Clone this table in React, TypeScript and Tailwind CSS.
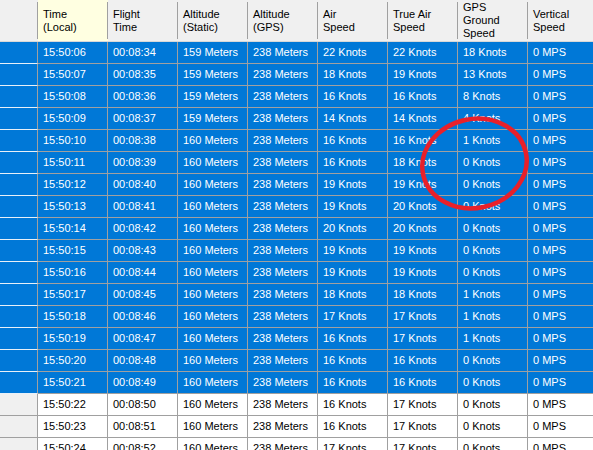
const COLUMNS = [
  ["Time", "(Local)"],
  ["Flight", "Time"],
  ["Altitude", "(Static)"],
  ["Altitude", "(GPS)"],
  ["Air", "Speed"],
  ["True Air", "Speed"],
  ["GPS", "Ground", "Speed"],
  ["Vertical", "Speed"],
];

// sec, flight sec, alt static, air, true air, gps ground
const RAW: [number, number, number, number, number, number][] = [
  [6, 34, 159, 22, 22, 18],
  [7, 35, 159, 18, 19, 13],
  [8, 36, 159, 16, 16, 8],
  [9, 37, 159, 14, 14, 4],
  [10, 38, 160, 16, 16, 1],
  [11, 39, 160, 16, 18, 0],
  [12, 40, 160, 19, 19, 0],
  [13, 41, 160, 19, 20, 0],
  [14, 42, 160, 20, 20, 0],
  [15, 43, 160, 19, 19, 0],
  [16, 44, 160, 19, 19, 0],
  [17, 45, 160, 18, 18, 1],
  [18, 46, 160, 17, 17, 1],
  [19, 47, 160, 16, 17, 1],
  [20, 48, 160, 16, 16, 0],
  [21, 49, 160, 16, 16, 0],
  [22, 50, 160, 16, 17, 0],
  [23, 51, 160, 16, 17, 0],
  [24, 52, 160, 17, 17, 0],
];

const pad = (n: number) => String(n).padStart(2, "0");

function rowCells(r: (typeof RAW)[number]) {
  return [
    `15:50:${pad(r[0])}`,
    `00:08:${pad(r[1])}`,
    `${r[2]} Meters`,
    "238 Meters",
    `${r[3]} Knots`,
    `${r[4]} Knots`,
    `${r[5]} Knots`,
    "0 MPS",
  ];
}

export default function App() {
  return (
    <div
      className="relative h-[450px] w-[593px] overflow-hidden bg-white text-[11px] leading-[13px]"
      style={{ fontFamily: '"Liberation Sans", Arial, sans-serif' }}
    >
      <div className="w-[598px]">
        {/* header */}
        <div className="flex h-[42px] border-b border-[#d8d8d8] bg-[#f0f0f0] text-black">
          <div className="w-[38px] shrink-0 py-[2px]">
            <div className="h-full border-r border-[#a0a0a0]" />
          </div>
          {COLUMNS.map((lines, i) => (
            <div
              key={i}
              className={`w-[70px] shrink-0 py-[2px] ${i === 0 ? "bg-[#ffffe1]" : ""}`}
            >
              <div className="flex h-full flex-col justify-center border-r border-[#a0a0a0] pl-[5px]">
                {lines.map((l) => (
                  <span key={l}>{l}</span>
                ))}
              </div>
            </div>
          ))}
        </div>

        {/* rows */}
        {RAW.map((r, idx) => {
          const sel = idx < 16;
          return (
            <div key={idx} className="flex h-[22px]">
              <div
                className={`w-[38px] shrink-0 border-r border-b border-r-[#a0a0a0] ${
                  sel ? "bg-[#0078d7] border-b-[#e8f0f8]" : "bg-[#f0f0f0] border-b-[#a0a0a0]"
                }`}
              />
              {rowCells(r).map((c, j) => (
                <div
                  key={j}
                  className={`flex w-[70px] shrink-0 items-center border-r border-b border-[#a0a0a0] pl-[5px] ${
                    sel ? "bg-[#0078d7] text-white" : "bg-white text-black"
                  }`}
                >
                  {c}
                </div>
              ))}
            </div>
          );
        })}
      </div>

      {/* hand-drawn red circle */}
      <svg className="pointer-events-none absolute left-0 top-0" width="593" height="450">
        <ellipse
          cx="474.5"
          cy="163.5"
          rx="52.5"
          ry="44.5"
          transform="rotate(-12 474.5 163.5)"
          fill="none"
          stroke="#e8202a"
          strokeWidth="4.5"
        />
      </svg>
    </div>
  );
}
